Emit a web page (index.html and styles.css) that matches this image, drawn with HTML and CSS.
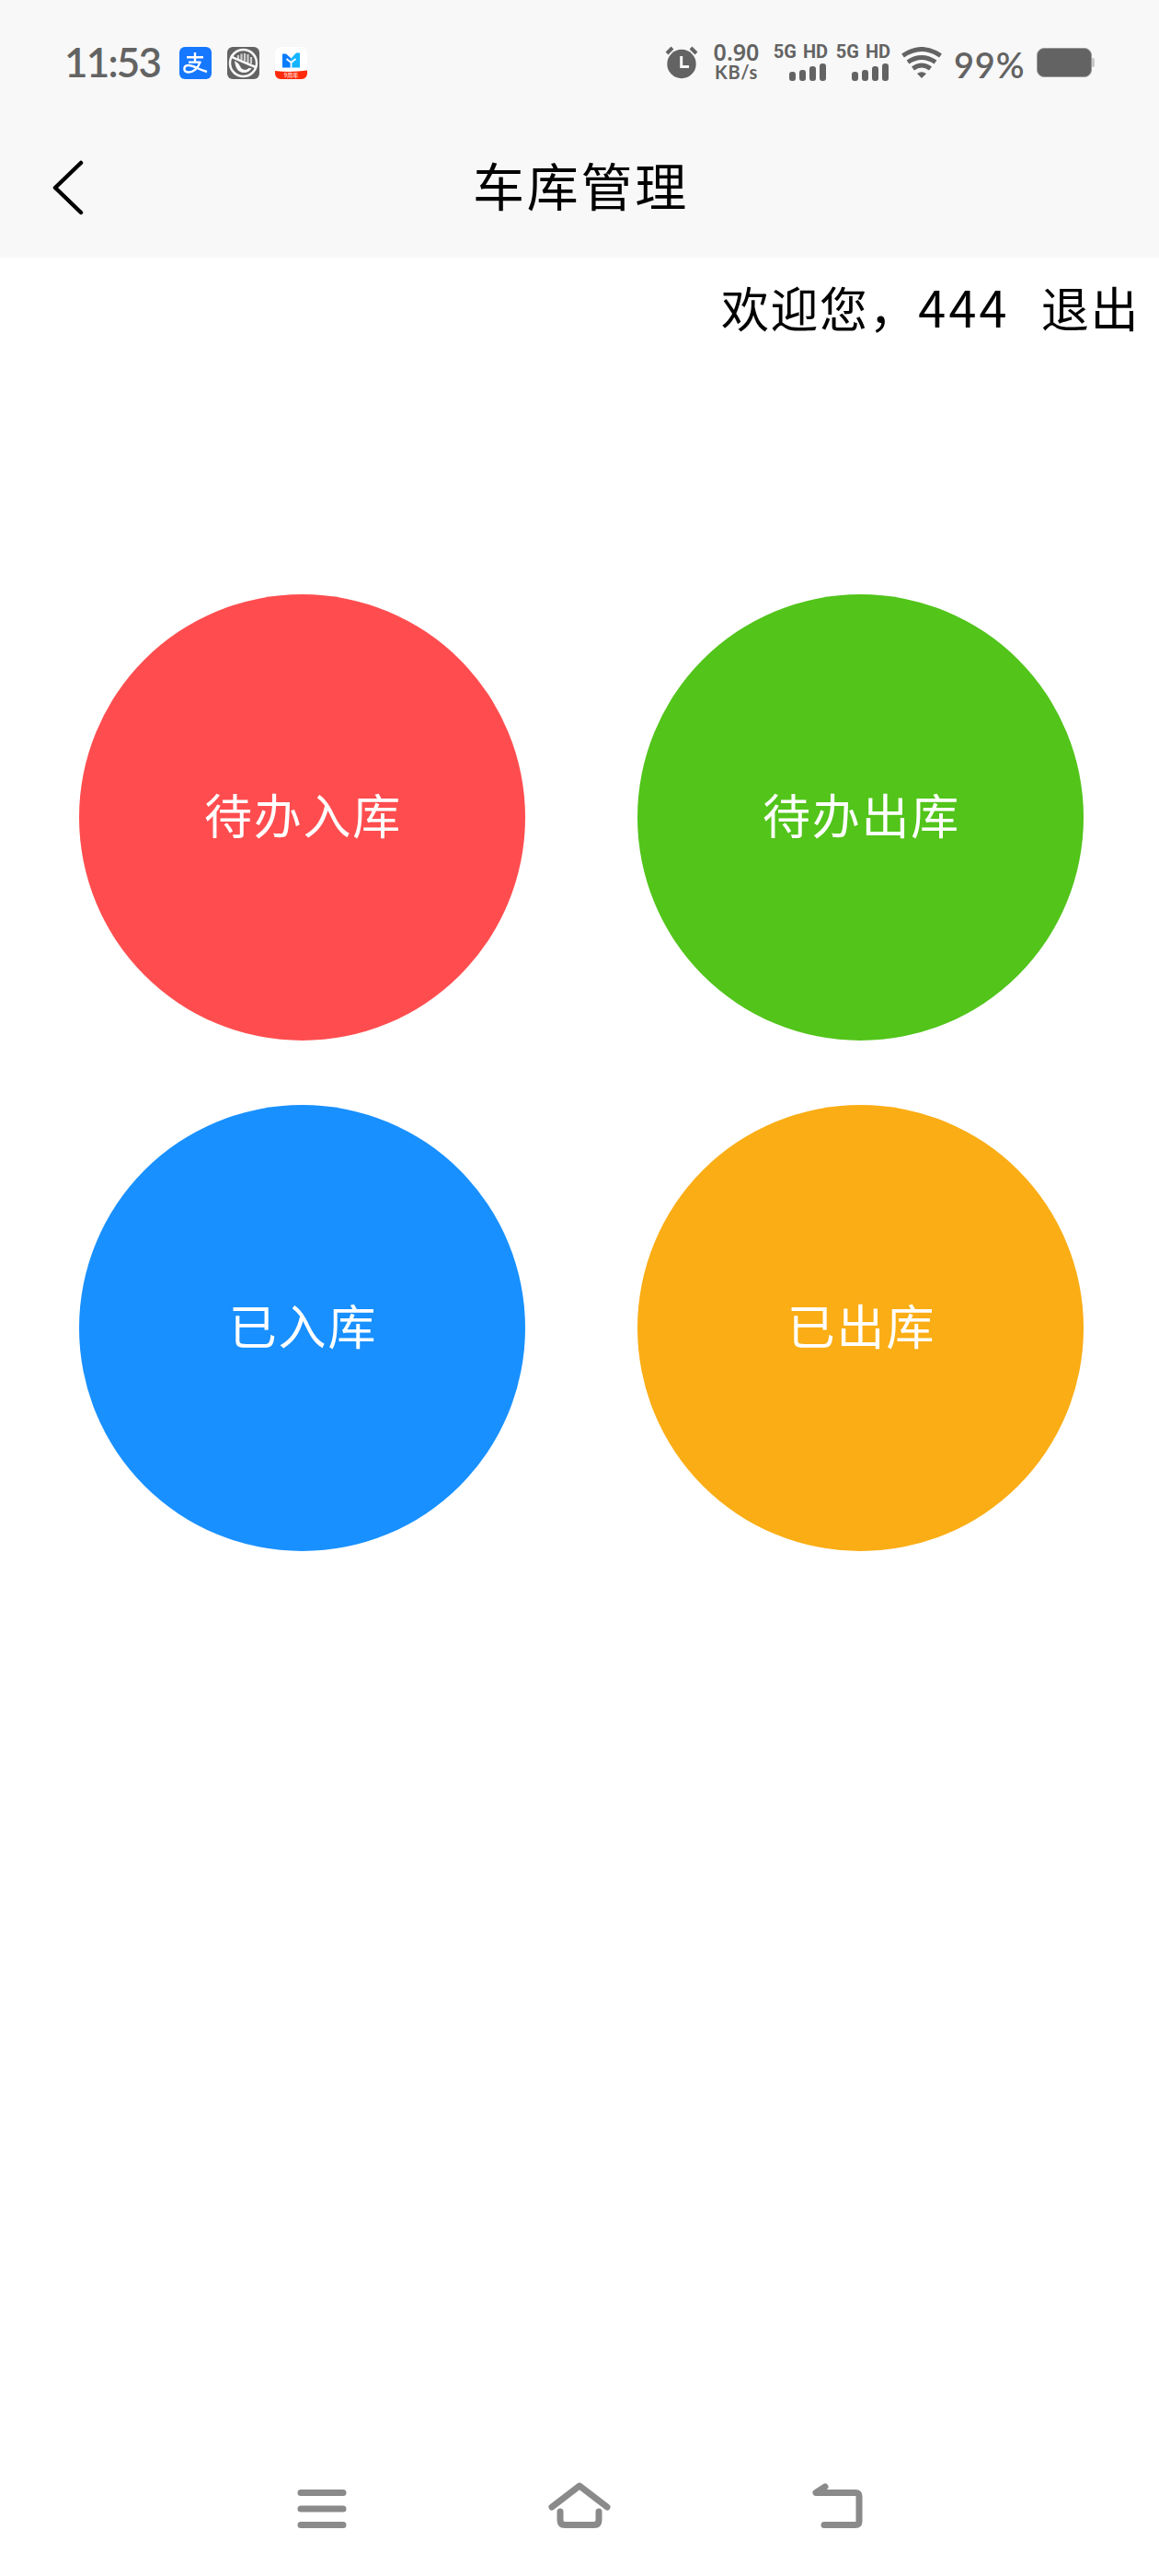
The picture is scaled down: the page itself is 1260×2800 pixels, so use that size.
FILE: index.html
```html
<!DOCTYPE html>
<html lang="zh-CN">
<head>
    <meta charset="UTF-8">
    <meta name="viewport" content="width=device-width, initial-scale=1.0">
    <title>车库管理</title>
    <link rel="stylesheet" href="styles.css">
</head>
<body>
    <!-- System status bar -->
    <div class="status-bar">
        <span class="time">11:53</span>
        <div class="apps">
            <svg class="app" viewBox="0 0 35 35">
                <rect width="35" height="35" rx="6" fill="#1677ff"/>
                <g fill="none" stroke="#fff" stroke-width="2.4">
                    <path d="M8 11.300h18M17 6v11M10 16.600h13.500"/>
                    <path d="M22.500 16.500C20.500 23 15 27.800 9.500 27.500C4 27 4 20.500 9.500 20C15 19.500 20 24.500 30 27"/>
                </g>
            </svg>
            <svg class="app" viewBox="0 0 35 35">
                <rect width="35" height="35" rx="6" fill="#636363"/>
                <circle cx="17.500" cy="17.500" r="14.500" fill="none" stroke="#f8f8f8" stroke-width="2.500"/>
                <path d="M12 13V9M15.500 14V7.500M19 15.500V7M22.500 17V8M26 18V11" stroke="#d0d0d0" stroke-width="2.200"/>
                <path d="M5 11l26 11" stroke="#f8f8f8" stroke-width="2.600"/>
                <path d="M8 15c1 8 4 13 10 13c4 0 7-2 8.500-5h-3c-2 2-4 2.500-6 1.500c-3-1-3-4-6-7z" fill="#f8f8f8"/>
            </svg>
            <svg class="app" viewBox="0 0 35 35">
                <rect width="35" height="35" rx="6" fill="#fff"/>
                <path d="M8 22.500V7.500h4l5.500 5v10z" fill="#0a7cff"/>
                <path d="M27 22.500V6.500h-4l-5.500 6v10z" fill="#13b5ff"/>
                <path d="M12.500 13l5 4 5-4M17.500 17v6" fill="none" stroke="#fff" stroke-width="1.800"/>
                <path d="M0 26q17.500 2 35-.500V29a6 6 0 0 1-6 6H6a6 6 0 0 1-6-6z" fill="#ff2a0a"/>
                <text x="17.500" y="33" class="badge-text">9周年</text>
            </svg>
        </div>
        <div class="indicators">
            <svg class="alarm" viewBox="0 0 36 36">
                <circle cx="18" cy="19.500" r="15.700" fill="#636363"/>
                <path d="M2 8l6-6M34 8l-6-6" stroke="#636363" stroke-width="4"/>
                <path d="M17.700 11v11.500H26" fill="none" stroke="#f8f8f8" stroke-width="3"/>
            </svg>
            <div class="speed">
                <span class="rate">0.90</span>
                <span class="unit">KB/s</span>
            </div>
            <div class="sim">
                <span class="net">5G HD</span>
                <div class="bars"><i class="b1"></i><i class="b2"></i><i class="b3"></i><i class="b4"></i></div>
            </div>
            <div class="sim">
                <span class="net">5G HD</span>
                <div class="bars"><i class="b1"></i><i class="b2"></i><i class="b3"></i><i class="b4"></i></div>
            </div>
            <svg class="wifi" viewBox="0 0 44 34">
                <g fill="none" stroke="#636363" stroke-width="5">
                    <path d="M1.500 9.500Q22 -4.500 42.500 9.500"/>
                    <path d="M7 16.500Q22 6.500 37 16.500"/>
                    <path d="M12.500 23.500Q22 16.500 31.500 23.500"/>
                </g>
                <path d="M17 29Q22 25.500 27 29L22 34z" fill="#636363"/>
            </svg>
            <span class="percent">99%</span>
            <div class="battery"></div>
        </div>
    </div>

    <!-- Title bar -->
    <div class="nav-bar">
        <svg class="back" viewBox="0 0 34 60">
            <path d="M31 3L3 30l28 27" fill="none" stroke="#000" stroke-width="4.500" stroke-linecap="round" stroke-linejoin="round"/>
        </svg>
        <h1 class="title">车库管理</h1>
    </div>

    <div class="content">
        <div class="user-row">
            <span class="welcome">欢迎您，<span class="user-name">444</span></span>
            <a class="logout">退出</a>
        </div>
        <div class="menu">
            <div class="circle red">待办入库</div>
            <div class="circle green">待办出库</div>
            <div class="circle blue">已入库</div>
            <div class="circle orange">已出库</div>
        </div>
    </div>

    <!-- System navigation -->
    <div class="system-nav">
        <svg viewBox="0 0 70 52">
            <path d="M12 11.500h46M12 29h46M12 46.500h46"/>
        </svg>
        <svg viewBox="0 0 70 52">
            <path d="M5 27L35 4l30 23"/>
            <path d="M14 32v9q0 5.500 5 5.500h32q5 0 5-5.500v-9"/>
        </svg>
        <svg viewBox="0 0 70 52">
            <path d="M22 5L12 11.500h43q4 0 4 4v27q0 4-4 4H21"/>
        </svg>
    </div>
</body>
</html>
```

FILE: styles.css
```css
* {
    box-sizing: border-box;
}

body {
    margin: 0;
    width: 1260px;
    height: 2800px;
    display: flex;
    flex-direction: column;
    background: #fff;
    color: #000;
    font-family: "Noto Sans CJK SC", sans-serif;
}

.status-bar {
    height: 136px;
    padding: 0 70px;
    display: flex;
    align-items: center;
    background: #f8f8f8;
    color: #636363;
    font-family: Lato, sans-serif;
    font-weight: 600;
}

.time {
    width: 125px;
    padding-bottom: 2px;
    font-size: 44px;
    line-height: 48px;
    letter-spacing: -1.8px;
}

.apps {
    display: flex;
    gap: 17px;
}

.app {
    width: 35px;
    height: 35px;
}

.badge-text {
    font-family: "Noto Sans CJK SC", sans-serif;
    font-size: 6px;
    font-weight: 400;
    fill: #fff;
    text-anchor: middle;
}

.indicators {
    margin-left: auto;
    display: flex;
    align-items: center;
}

.alarm {
    width: 36px;
    height: 36px;
    margin-right: 13px;
}

.speed {
    width: 57px;
    margin-right: 15px;
    display: flex;
    flex-direction: column;
    align-items: center;
}

.rate {
    font-family: "Noto Sans", sans-serif;
    font-size: 25px;
    line-height: 21px;
}

.unit {
    font-family: Lato, sans-serif;
    font-size: 20px;
    font-weight: 700;
    line-height: 23px;
    letter-spacing: 0.7px;
}

.sim {
    width: 56px;
    margin-right: 12px;
    display: flex;
    flex-direction: column;
    align-items: flex-end;
    gap: 4px;
}

.net {
    font-family: Roboto, sans-serif;
    font-size: 20px;
    font-weight: 700;
    line-height: 17px;
    word-spacing: 2px;
    white-space: nowrap;
}

.bars {
    padding-right: 2px;
    display: flex;
    align-items: flex-end;
    gap: 4px;
}

.bars i {
    width: 7px;
    border-radius: 3px;
    background: #636363;
}

.b1 { height: 10px; }
.b2 { height: 12px; }
.b3 { height: 16px; }
.b4 { height: 19px; }

.wifi {
    width: 44px;
    height: 34px;
    margin-right: 13px;
}

.percent {
    width: 90px;
    padding-top: 3px;
    font-size: 38px;
    line-height: 40px;
    letter-spacing: 0.8px;
}

.battery {
    position: relative;
    width: 60px;
    height: 32px;
    margin-right: 3px;
    border: 1px solid #999;
    border-radius: 8px;
    background: #636363;
}

.battery::after {
    content: '';
    position: absolute;
    top: 10px;
    right: -4px;
    width: 3px;
    height: 10px;
    border-radius: 0 2px 2px 0;
    background: #c8c8c8;
}

.nav-bar {
    height: 144px;
    padding: 0 57px 8px;
    display: grid;
    grid-template-columns: 34px 1fr 34px;
    align-items: center;
    background: #f8f8f8;
}

.back {
    width: 34px;
    height: 60px;
}

.title {
    margin: 0;
    padding: 0 0 8px 3px;
    text-align: center;
    font-size: 56px;
    font-weight: 400;
    line-height: 80px;
    letter-spacing: 2.8px;
}

.content {
    flex: 1;
}

.user-row {
    height: 112px;
    padding: 0 21px 6px;
    display: flex;
    justify-content: flex-end;
    align-items: center;
    gap: 34px;
    font-size: 52px;
    letter-spacing: 1.6px;
}

.user-name {
    font-size: 54px;
    line-height: 60px;
    letter-spacing: 3.2px;
}

.menu {
    padding: 254px 82px 0 86px;
    display: grid;
    grid-template-columns: 485px 485px;
    gap: 70px 122px;
}

.circle {
    height: 485px;
    padding: 0 0 8px 2px;
    border-radius: 50%;
    display: flex;
    justify-content: center;
    align-items: center;
    color: #fff;
    font-size: 52px;
    letter-spacing: 1.8px;
}

.red { background: #ff4d4f; }
.green { background: #52c41a; }
.blue { background: #1890ff; }
.orange { background: #faad14; }

.system-nav {
    height: 102px;
    padding: 0 315px;
    display: flex;
    justify-content: space-between;
}

.system-nav svg {
    width: 70px;
    height: 52px;
    fill: none;
    stroke: #8a8a8a;
    stroke-width: 7;
    stroke-linecap: round;
    stroke-linejoin: round;
}
```
